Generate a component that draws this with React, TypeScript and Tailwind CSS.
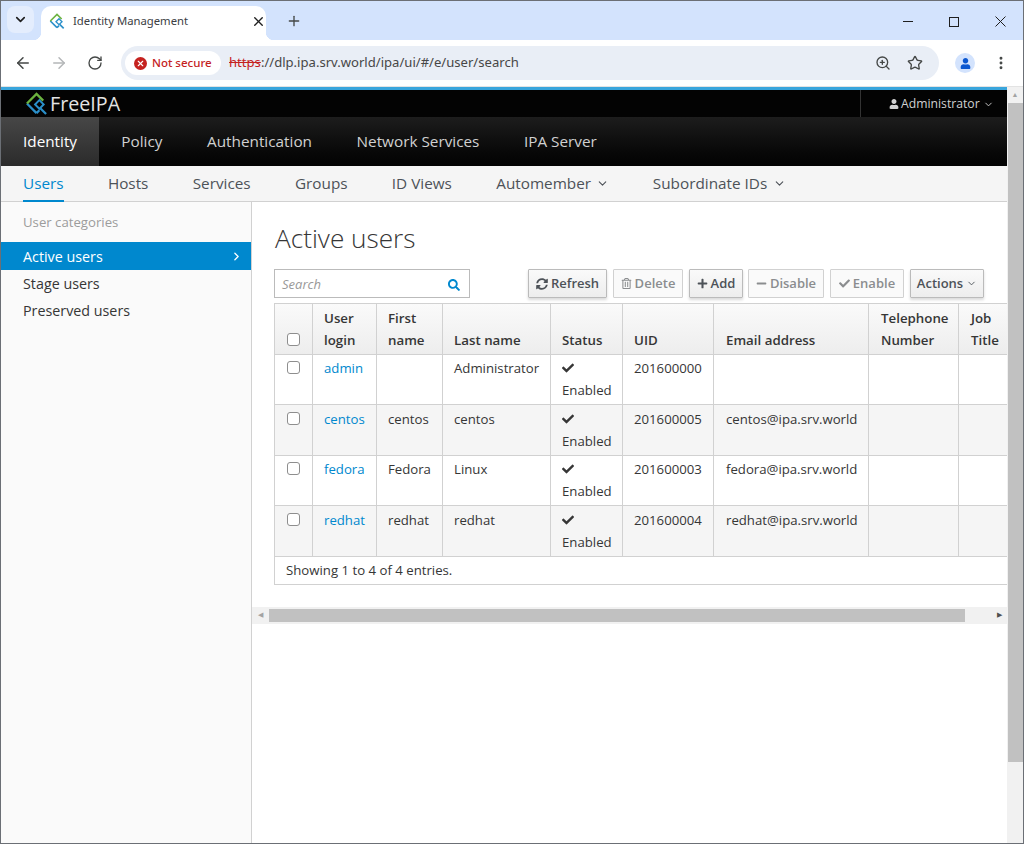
import { FaCheck, FaMinus, FaPlus, FaRegTrashAlt, FaSearch, FaSyncAlt, FaUser } from 'react-icons/fa';
import { ArrowLeft, ArrowRight, ChevronDown, ChevronRight, EllipsisVertical, Plus, RotateCw, Star, X, ZoomIn } from 'lucide-react';

const users = [
  { login: 'admin', first: '', last: 'Administrator', uid: '201600000', email: '' },
  { login: 'centos', first: 'centos', last: 'centos', uid: '201600005', email: 'centos@ipa.srv.world' },
  { login: 'fedora', first: 'Fedora', last: 'Linux', uid: '201600003', email: 'fedora@ipa.srv.world' },
  { login: 'redhat', first: 'redhat', last: 'redhat', uid: '201600004', email: 'redhat@ipa.srv.world' },
];

const primaryNav = ['Policy', 'Authentication', 'Network Services', 'IPA Server'];

function Logo({ size }: { size: number }) {
  return (
    <svg width={size} height={size} viewBox="0 0 24 24" fill="none">
      <path d="M12 22 L2 12" stroke="#2a8fc9" strokeWidth="2.4" />
      <path d="M12 22 L15 19" stroke="#2a8fc9" strokeWidth="2.4" />
      <path d="M2 12 L12 2 L19 9" stroke="#6cb33f" strokeWidth="2.4" />
      <path d="M10.5 13 L15 8.5 L19.5 13 L15 17.5 Z" stroke="#2a8fc9" strokeWidth="2" />
      <path d="M16 17 L22 23" stroke="#2a8fc9" strokeWidth="2.4" />
    </svg>
  );
}

function ToolButton({ label, icon, after, disabled, width }: { label: string; icon?: React.ReactNode; after?: React.ReactNode; disabled?: boolean; width: string }) {
  return (
    <button
      className={
        (disabled
          ? 'h-[29px] flex items-center justify-center gap-[3px] border border-[#d1d1d1] bg-[#fafafa] text-[#8b8d8f] text-[13px] font-semibold rounded-[1px] '
          : 'h-[29px] flex items-center justify-center gap-[3px] border border-[#bbbbbb] bg-gradient-to-b from-[#fafafa] to-[#ededed] text-[#4d5258] text-[13px] font-semibold rounded-[1px] shadow-[0_2px_3px_rgba(3,3,3,0.15)] ') + width
      }
    >
      {icon}
      {label}
      {after}
    </button>
  );
}

export default function App() {
  return (
    <div className="w-[1024px] h-[844px] overflow-hidden flex flex-col bg-white border border-[#6b6f75] font-['Open_Sans',sans-serif] text-[13.2px] text-[#363636]">
      {/* Browser tab strip */}
      <div className="h-[39px] shrink-0 bg-[#d3e3fd] flex items-start pl-[6px] pt-[5px] font-['Noto_Sans',sans-serif]">
        <div className="w-[27px] h-[27px] rounded-[8px] bg-[#e4edfd] flex items-center justify-center">
          <ChevronDown size={15} strokeWidth={2.6} className="text-[#1f1f1f]" />
        </div>
        <div className="relative ml-[7px] w-[225px] h-[34px] bg-white rounded-t-[10px] flex items-center pl-[8px] pr-[0px] pb-[4px] before:absolute before:-left-[8px] before:bottom-0 before:w-[8px] before:h-[8px] before:bg-[radial-gradient(circle_at_0_0,transparent_8px,white_8.5px)] after:absolute after:-right-[8px] after:bottom-0 after:w-[8px] after:h-[8px] after:bg-[radial-gradient(circle_at_100%_0,transparent_8px,white_8.5px)]">
          <Logo size={16} />
          <span className="ml-[8px] text-[11.3px] text-[#3c4043] flex-1">Identity Management</span>
          <X size={15} strokeWidth={2.2} className="text-[#1f1f1f]" />
        </div>
        <div className="ml-[20px] mt-[7px]">
          <Plus size={16} strokeWidth={2} className="text-[#444746]" />
        </div>
        <div className="ml-auto flex items-center mt-[10px] pr-[17px]">
          <span className="w-[10px] h-[1px] bg-[#1f1f1f]" />
          <span className="w-[10px] h-[10px] border border-[#1f1f1f] ml-[36px]" />
          <svg width="11" height="11" viewBox="0 0 11 11" className="ml-[36px]" stroke="#1f1f1f" strokeWidth="1">
            <path d="M0.5 0.5 L10.5 10.5 M10.5 0.5 L0.5 10.5" />
          </svg>
        </div>
      </div>

      {/* Browser toolbar */}
      <div className="h-[46px] shrink-0 bg-white rounded-t-[8px] flex items-center pl-[13px] font-['Noto_Sans',sans-serif]">
        <ArrowLeft size={18} strokeWidth={2} className="text-[#444746]" />
        <ArrowRight size={18} strokeWidth={2} className="text-[#b4b6b8] ml-[18px]" />
        <RotateCw size={16} strokeWidth={2} className="text-[#444746] ml-[19px]" />
        <div className="ml-[18px] w-[818px] h-[34px] rounded-[17px] bg-[#e9eef6] flex items-center pl-[4px] pr-[16px]">
          <div className="w-[96px] h-[24px] rounded-[12px] bg-white flex items-center pl-[9px] text-[11.5px] text-[#c5221f] font-medium">
            <span className="w-[13px] h-[13px] rounded-full bg-[#c5221f] flex items-center justify-center mr-[5px]">
              <X size={9} strokeWidth={3} className="text-white" />
            </span>
            Not secure
          </div>
          <div className="ml-[8px] text-[13.1px] text-[#1f1f1f] flex-1">
            <span className="line-through text-[#c5221f]">https</span>
            <span className="text-[#474747]">://dlp.ipa.srv.world/ipa/ui/#/e/user/search</span>
          </div>
          <ZoomIn size={16} strokeWidth={2} className="text-[#444746]" />
          <Star size={16} strokeWidth={2} className="text-[#444746] ml-[16px]" />
        </div>
        <div className="ml-[16px] w-[20px] h-[20px] rounded-full bg-[#d3e3fd] flex items-center justify-center">
          <FaUser size={11} className="text-[#0b57d0]" />
        </div>
        <EllipsisVertical size={16} strokeWidth={2.4} className="text-[#444746] ml-[18px]" />
      </div>

      {/* Page */}
      <div className="flex-1 min-h-0 flex border-t border-[#e3e3e3]">
        <div className="flex-1 min-w-0 flex flex-col">
          <div className="h-[3px] shrink-0 bg-[#39a5dc]" />
          <div className="h-[27px] shrink-0 bg-[#030303] flex items-center pl-[24px]">
            <Logo size={23} />
            <span className="ml-[2px] text-[19.7px] text-[#e4e4e4] leading-none">FreeIPA</span>
            <div className="ml-auto w-[147px] h-full border-l border-[#333333] flex items-center pl-[28px] pt-[1px] text-[12.2px] text-[#d1d1d1]">
              <FaUser size={10} className="text-[#d1d1d1] mr-[2px]" />
              Administrator
              <ChevronDown size={11} strokeWidth={2} className="ml-[3px]" />
            </div>
          </div>

          {/* Primary nav */}
          <div className="h-[49px] shrink-0 bg-gradient-to-b from-[#1d1d1d] to-[#030303] flex text-[15.3px] text-[#d1d1d1]">
            <div className="h-full px-[22px] flex items-center text-white bg-gradient-to-b from-[#474747] to-[#2b2b2b]">Identity</div>
            {primaryNav.map((item) => (
              <div key={item} className="h-full px-[22.3px] flex items-center">
                {item}
              </div>
            ))}
          </div>

          {/* Secondary nav */}
          <div className="h-[36px] shrink-0 bg-[#f5f5f5] border-b border-[#d1d1d1] flex pl-[22px] gap-[44.3px] text-[15.3px] text-[#4d5258]">
            <div className="h-[36px] flex items-center border-b-2 border-[#0088ce] text-[#0088ce]">Users</div>
            <div className="flex items-center">Hosts</div>
            <div className="flex items-center">Services</div>
            <div className="flex items-center">Groups</div>
            <div className="flex items-center">ID Views</div>
            <div className="flex items-center gap-[4.5px]">
              Automember
              <ChevronDown size={13} strokeWidth={2} />
            </div>
            <div className="flex items-center gap-[6px]">
              Subordinate IDs
              <ChevronDown size={13} strokeWidth={2} />
            </div>
          </div>

          <div className="flex-1 min-h-0 flex">
            {/* Sidebar */}
            <div className="w-[251px] shrink-0 bg-[#fafafa] border-r border-[#d1d1d1] text-[14.3px]">
              <div className="mt-[11px] ml-[22px] text-[13.2px] leading-[18px] text-[#9c9c9c]">User categories</div>
              <div className="mt-[11px] h-[28px] bg-[#0088ce] text-white flex items-center justify-between pl-[22px] pr-[8px] pt-[1px]">
                Active users
                <ChevronRight size={13} strokeWidth={2.4} />
              </div>
              <div className="pl-[22px] leading-[27px]">
                <div>Stage users</div>
                <div>Preserved users</div>
              </div>
            </div>

            {/* Content */}
            <div className="flex-1 min-w-0 flex flex-col overflow-hidden">
              <div className="pl-[22px]">
                <h1 className="mt-[16px] ml-[1px] text-[26.2px] leading-[40px] font-light text-[#363636]">Active users</h1>
                <div className="mt-[11px] w-[710px] flex items-start">
                  <div className="w-[196px] h-[29px] border border-[#bbbbbb] flex items-center justify-between pl-[7px] pr-[9px] pt-[2px] mr-[58px]">
                    <span className="italic text-[13px] text-[#999999]">Search</span>
                    <FaSearch size={12} className="text-[#0088ce]" />
                  </div>
                  <div className="flex gap-[6px]">
                    <ToolButton width="w-[79px]" label="Refresh" icon={<FaSyncAlt size={12} />} />
                    <ToolButton width="w-[70px]" label="Delete" icon={<FaRegTrashAlt size={11} />} disabled />
                    <ToolButton width="w-[54px]" label="Add" icon={<FaPlus size={11} />} />
                    <ToolButton width="w-[76px] -ml-[1px]" label="Disable" icon={<FaMinus size={11} />} disabled />
                    <ToolButton width="w-[74px]" label="Enable" icon={<FaCheck size={11} />} disabled />
                    <ToolButton width="w-[74px]" label="Actions" after={<ChevronDown size={11} strokeWidth={2} />} />
                  </div>
                </div>
                <div className="mt-[5px] w-[800px]">
                  <table className="table-fixed border-collapse w-[746px] leading-[22px]">
                    <colgroup>
                      <col className="w-[38px]" />
                      <col className="w-[64px]" />
                      <col className="w-[66px]" />
                      <col className="w-[108px]" />
                      <col className="w-[72px]" />
                      <col className="w-[91px]" />
                      <col className="w-[155px]" />
                      <col className="w-[90px]" />
                      <col className="w-[62px]" />
                    </colgroup>
                    <thead>
                      <tr className="h-[51px] bg-gradient-to-b from-[#fafafa] to-[#ededed] font-semibold text-[13.3px] text-[#363636]">
                        <th className="border border-[#d1d1d1] px-[12px] pb-[3px] align-bottom">
                          <span className="block w-[13px] h-[13px] border border-[#8e8e8e] rounded-[3px] bg-white mb-[5px]" />
                        </th>
                        {[
                          ['User', 'login'],
                          ['First', 'name'],
                          ['Last name'],
                          ['Status'],
                          ['UID'],
                          ['Email address'],
                          ['Telephone', 'Number'],
                          ['Job', 'Title'],
                        ].map((lines, i) => (
                          <th key={lines[0]} className={i >= 5 ? 'border border-[#d1d1d1] pl-[12px] pb-[3px] text-left font-semibold align-bottom' : 'border border-[#d1d1d1] pl-[11px] pb-[3px] text-left font-semibold align-bottom'}>
                            {lines.map((line) => (
                              <div key={line}>{line}</div>
                            ))}
                          </th>
                        ))}
                      </tr>
                    </thead>
                    <tbody>
                      {users.map((user, i) => {
                        const odd = i % 2 === 1;
                        const cell = odd
                          ? 'border border-[#d1d1d1] pl-[11px] align-top pt-[3px]'
                          : 'border border-[#d1d1d1] pl-[11px] align-top pt-[2px]';
                        return (
                          <tr key={user.login} className={odd ? 'h-[51px] bg-[#f5f5f5]' : 'h-[50px] bg-white'}>
                            <td className={odd ? 'border border-[#d1d1d1] px-[12px] align-top pt-[7px]' : 'border border-[#d1d1d1] px-[12px] align-top pt-[6px]'}>
                              <span className="block w-[13px] h-[13px] border border-[#8e8e8e] rounded-[3px] bg-white" />
                            </td>
                            <td className={cell + ' text-[#0088ce]'}>{user.login}</td>
                            <td className={cell}>{user.first}</td>
                            <td className={cell}>{user.last}</td>
                            <td className={cell}>
                              <div className="h-[22px] flex items-center">
                                <FaCheck size={12} className="text-[#363636]" />
                              </div>
                              <div>Enabled</div>
                            </td>
                            <td className={cell}>{user.uid}</td>
                            <td className={cell + ' !pl-[12px] whitespace-nowrap'}>{user.email}</td>
                            <td className="border border-[#d1d1d1]" />
                            <td className="border border-[#d1d1d1]" />
                          </tr>
                        );
                      })}
                    </tbody>
                  </table>
                  <div className="w-[746px] h-[28px] border-l border-b border-[#d1d1d1] flex items-center pl-[11px] text-[13.2px]">
                    Showing 1 to 4 of 4 entries.
                  </div>
                </div>
              </div>

              {/* Horizontal scrollbar */}
              <div className="mt-[22px] h-[17px] bg-[#f1f1f1] flex items-center pr-[5px]">
                <span className="w-[17px] flex justify-center text-[7px] text-[#a3a3a3]">◀</span>
                <span className="w-[696px] h-[13px] bg-[#c1c1c1]" />
                <span className="ml-auto text-[7px] text-[#505050]">▶</span>
              </div>
            </div>
          </div>
        </div>

        {/* Vertical scrollbar */}
        <div className="w-[16px] shrink-0 bg-[#f1f1f1] flex flex-col items-center pt-[3px]">
          <span className="text-[7px] leading-[10px] text-[#a3a3a3]">▲</span>
          <span className="mt-[3px] w-[15px] h-[659px] bg-[#c1c1c1]" />
        </div>
      </div>
    </div>
  );
}
